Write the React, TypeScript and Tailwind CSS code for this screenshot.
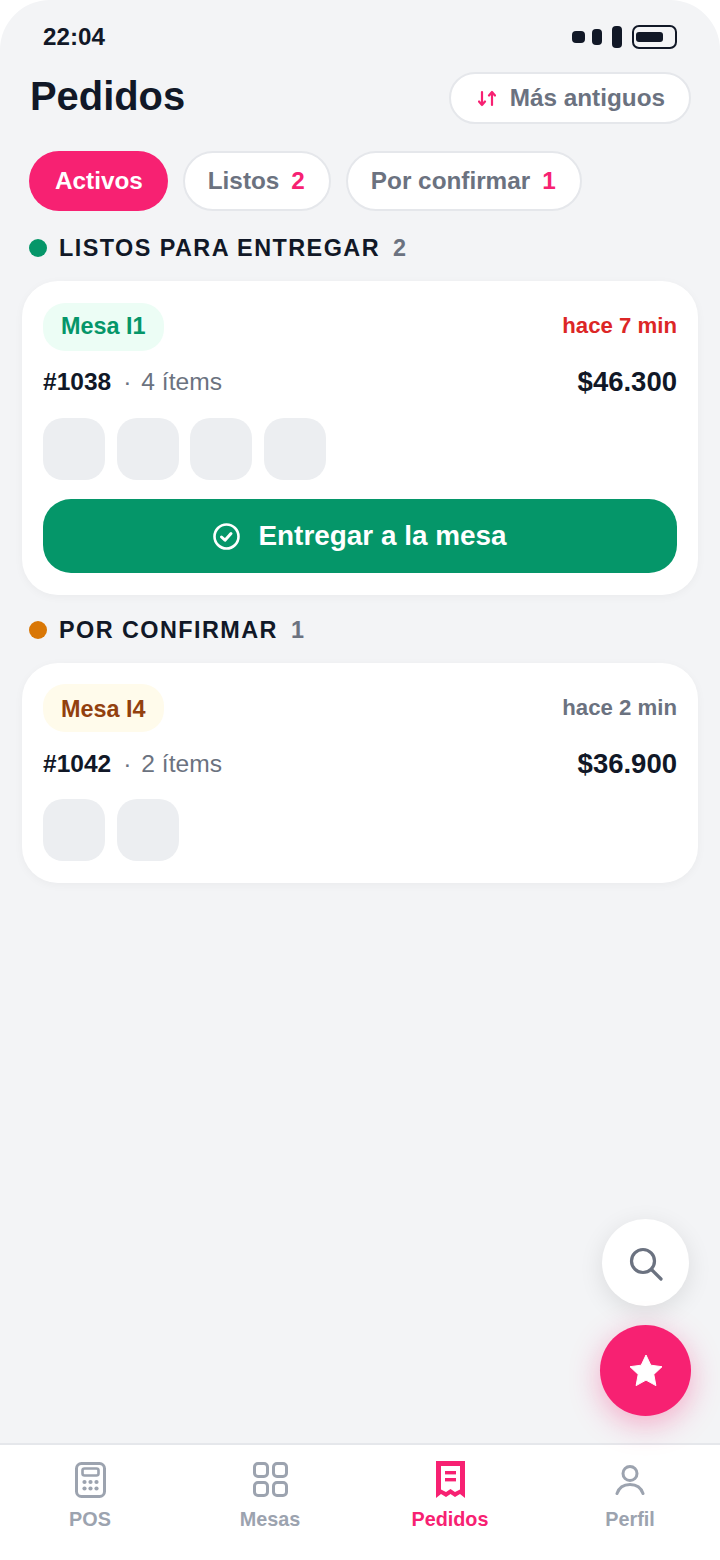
import React from 'react';

const FONT = "font-['Liberation_Sans',Arial,sans-serif]";

const SortIcon = () => (
  <svg width="18" height="17" viewBox="0 0 18 17" fill="none" stroke="#f72172" strokeWidth="2.2" strokeLinecap="round" strokeLinejoin="round">
    <path d="M4 2V15M1 11.5L4 15L7 11.5" />
    <path d="M14 15V2M11 5.5L14 2L17 5.5" />
  </svg>
);

const SearchIcon = () => (
  <svg width="34" height="34" viewBox="0 0 34 34" fill="none" stroke="#6b7280" strokeWidth="3.2" strokeLinecap="round">
    <circle cx="14" cy="14" r="11.5" />
    <path d="M23 23L32 32" />
  </svg>
);

const PosIcon = () => (
  <svg width="31" height="36" viewBox="0 0 31 36" fill="none">
    <rect x="1.5" y="1.5" width="28" height="33" rx="5" stroke="#9ca3af" strokeWidth="3" />
    <rect x="7.5" y="6.5" width="16" height="7" rx="2" stroke="#9ca3af" strokeWidth="2.6" />
    {[9.5, 15.5, 21.5].map((x) => (
      <React.Fragment key={x}>
        <circle cx={x} cy="20" r="2.1" fill="#9ca3af" />
        <circle cx={x} cy="26.5" r="2.1" fill="#9ca3af" />
      </React.Fragment>
    ))}
  </svg>
);

const GridIcon = () => (
  <svg width="35" height="35" viewBox="0 0 35 35" fill="none" stroke="#9ca3af" strokeWidth="3">
    <rect x="1.5" y="1.5" width="13" height="13" rx="3.5" />
    <rect x="20.5" y="1.5" width="13" height="13" rx="3.5" />
    <rect x="1.5" y="20.5" width="13" height="13" rx="3.5" />
    <rect x="20.5" y="20.5" width="13" height="13" rx="3.5" />
  </svg>
);

const ReceiptIcon = () => (
  <svg width="29" height="37" viewBox="0 0 29 37" fill="#f72172">
    <path
      fillRule="evenodd"
      d="M0 0H29V37L24 33L19 36L14.5 33L10 36L5 33L0 37ZM5 5V28.5L10 31L14.5 28L19 31L24 28.5V5Z"
    />
    <rect x="9" y="10" width="11" height="3.4" />
    <rect x="9" y="17" width="11" height="3.4" />
  </svg>
);

const UserIcon = () => (
  <svg width="30" height="30" viewBox="0 0 30 30" fill="none" stroke="#9ca3af" strokeWidth="3" strokeLinecap="round">
    <circle cx="15" cy="8.5" r="7" />
    <path d="M2 28.5C4 22.5 9 19.5 15 19.5C21 19.5 26 22.5 28 28.5" />
  </svg>
);

const CheckIcon = () => (
  <svg width="27" height="27" viewBox="0 0 27 27" fill="none" stroke="white" strokeWidth="2.6" strokeLinecap="round" strokeLinejoin="round">
    <circle cx="13.5" cy="13.5" r="12" />
    <path d="M8.5 14L12 17.2L18 10.5" strokeWidth="3" />
  </svg>
);

const StarIcon = () => (
  <svg width="34" height="33" viewBox="0 0 34 33" fill="white" stroke="white" strokeWidth="1" strokeLinejoin="round">
    <path d="M17 1L21.8 11.2L33 12.7L24.8 20.4L26.9 31.6L17 26.1L7.1 31.6L9.2 20.4L1 12.7L12.2 11.2Z" />
  </svg>
);

const Tab = ({ label, count }: { label: string; count: string }) => (
  <div className="h-[60px] pl-[23px] pr-[24px] flex items-center gap-[12px] bg-white rounded-full border-2 border-[#e5e7eb] text-[24.3px] font-bold text-[#6b7280]">
    <span>{label}</span>
    <span className="text-[#f72172]">{count}</span>
  </div>
);

const SectionTitle = ({ dot, title, count }: { dot: string; title: string; count: string }) => (
  <div className="flex items-center h-[34px] pl-[7px]">
    <span className={`w-[18px] h-[18px] rounded-full ${dot}`} />
    <span className="ml-[12px] mt-[1px] text-[23.4px] font-bold tracking-[1.45px] text-[#111827]">{title}</span>
    <span className="ml-[13px] mt-[1px] text-[23.4px] font-bold text-[#6b7280]">{count}</span>
  </div>
);

type OrderProps = {
  top: string;
  row?: string;
  table: string;
  badge: string;
  time: string;
  timeColor: string;
  id: string;
  items: string;
  total: string;
  thumbs: number;
  children?: React.ReactNode;
};

const OrderCard = ({ top, row = '', table, badge, time, timeColor, id, items, total, thumbs, children }: OrderProps) => (
  <div className={`bg-white rounded-[36px] px-[21px] pb-[22px] shadow-[0_2px_10px_rgba(0,0,0,0.04)] ${top}`}>
    <div className="flex items-center justify-between">
      <span className={`h-[48px] px-[18px] flex items-center rounded-[22px] text-[23.4px] font-bold ${badge}`}>{table}</span>
      <span className={`text-[22.2px] font-bold -mt-[2px] ${timeColor}`}>{time}</span>
    </div>
    <div className={`flex items-center justify-between mt-[13px] h-[36px] ${row}`}>
      <div className="flex items-center mt-[1px]">
        <span className="text-[24.5px] font-bold text-[#111827]">{id}</span>
        <span className="ml-[12px] text-[24.6px] text-[#6b7280]">·</span>
        <span className="ml-[10px] text-[24.6px] text-[#6b7280]">{items}</span>
      </div>
      <span className="text-[27.5px] font-bold text-[#111827]">{total}</span>
    </div>
    <div className="flex gap-[11.5px] mt-[18px]">
      {Array.from({ length: thumbs }).map((_, i) => (
        <div key={i} className="w-[62px] h-[62px] rounded-[20px] bg-[#eceef1]" />
      ))}
    </div>
    {children}
  </div>
);

const NavItem = ({ icon, label, active }: { icon: React.ReactNode; label: string; active?: boolean }) => (
  <div className="w-[180px] flex flex-col items-center">
    <div className="h-[37px] flex items-center justify-center">{icon}</div>
    <span className={`mt-[7px] text-[19.8px] font-bold ${active ? 'text-[#f72172]' : 'text-[#9ca3af]'}`}>{label}</span>
  </div>
);

export default function App() {
  return (
    <div className={`relative w-[720px] h-[1560px] bg-white overflow-hidden flex flex-col ${FONT}`}>
      <div className="flex-1 bg-[#f3f4f6] rounded-t-[50px] flex flex-col">
        {/* Status bar */}
        <div className="flex items-center justify-between px-[43px] h-[72px] pt-[2px]">
          <span className="text-[24.2px] font-bold text-[#111827]">22:04</span>
          <div className="flex items-center">
            <span className="w-[13px] h-[12px] rounded-[4px] bg-[#111827]" />
            <span className="ml-[7px] w-[10px] h-[16px] rounded-[4px] bg-[#111827]" />
            <span className="ml-[10px] w-[10px] h-[22px] rounded-[4px] bg-[#111827]" />
            <span className="ml-[10px] w-[45px] h-[24px] rounded-[7px] border-2 border-[#111827] flex items-center pl-[2px]">
              <span className="w-[27px] h-[10px] rounded-[3px] bg-[#111827]" />
            </span>
          </div>
        </div>

        {/* Header */}
        <div className="flex items-center justify-between px-[29px] h-[52px]">
          <h1 className="text-[39.9px] font-bold text-[#111827] -mt-[2px] ml-[1px]">Pedidos</h1>
          <div className="h-[52px] pl-[27px] pr-[24px] flex items-center gap-[14px] bg-white rounded-full border-2 border-[#e5e7eb] text-[24.3px] font-bold text-[#6b7280]">
            <SortIcon />
            <span>Más antiguos</span>
          </div>
        </div>

        {/* Tabs */}
        <div className="flex items-center gap-[15px] pl-[29px] mt-[27px]">
          <div className="h-[60px] pl-[26px] pr-[25px] flex items-center rounded-full bg-[#f72172] text-white text-[24.3px] font-bold">Activos</div>
          <Tab label="Listos" count="2" />
          <Tab label="Por confirmar" count="1" />
        </div>

        <div className="mt-[20px] px-[22px] flex flex-col">
          <SectionTitle dot="bg-[#059669]" title="LISTOS PARA ENTREGAR" count="2" />
          <div className="mt-[16px]">
            <OrderCard
              top="pt-[22px]"
              table="Mesa I1"
              badge="bg-[#ecfdf5] text-[#059669]"
              time="hace 7 min"
              timeColor="text-[#dc2626]"
              id="#1038"
              items="4 ítems"
              total="$46.300"
              thumbs={4}
            >
              <div className="mt-[19px] h-[74px] rounded-[28px] bg-[#059669] flex items-center justify-center gap-[18px] text-white text-[27.9px] font-bold">
                <CheckIcon />
                <span>Entregar a la mesa</span>
              </div>
            </OrderCard>
          </div>

          <div className="mt-[18px]">
            <SectionTitle dot="bg-[#d97706]" title="POR CONFIRMAR" count="1" />
          </div>
          <div className="mt-[16px]">
            <OrderCard
              top="pt-[21px]"
              row="pt-[2px]"
              table="Mesa I4"
              badge="pt-[3px] bg-[#fffbeb] text-[#92400e]"
              time="hace 2 min"
              timeColor="pt-[2px] text-[#6b7280]"
              id="#1042"
              items="2 ítems"
              total="$36.900"
              thumbs={2}
            />
          </div>
        </div>
      </div>

      {/* Bottom nav */}
      <div className="h-[117px] bg-white border-t-2 border-[#e5e7eb] pt-[16px] flex items-start">
        <NavItem icon={<PosIcon />} label="POS" />
        <NavItem icon={<GridIcon />} label="Mesas" />
        <NavItem icon={<ReceiptIcon />} label="Pedidos" active />
        <NavItem icon={<UserIcon />} label="Perfil" />
      </div>

      {/* Floating buttons */}
      <div className="absolute left-[602px] top-[1219px] w-[87px] h-[87px] rounded-full bg-white flex items-center justify-center shadow-[0_6px_24px_rgba(0,0,0,0.1)]">
        <div className="mt-[3px]">
          <SearchIcon />
        </div>
      </div>
      <div className="absolute left-[600px] top-[1325px] w-[91px] h-[91px] rounded-full bg-[#f72172] flex items-center justify-center shadow-[0_8px_30px_rgba(247,33,114,0.35)]">
        <StarIcon />
      </div>
    </div>
  );
}
